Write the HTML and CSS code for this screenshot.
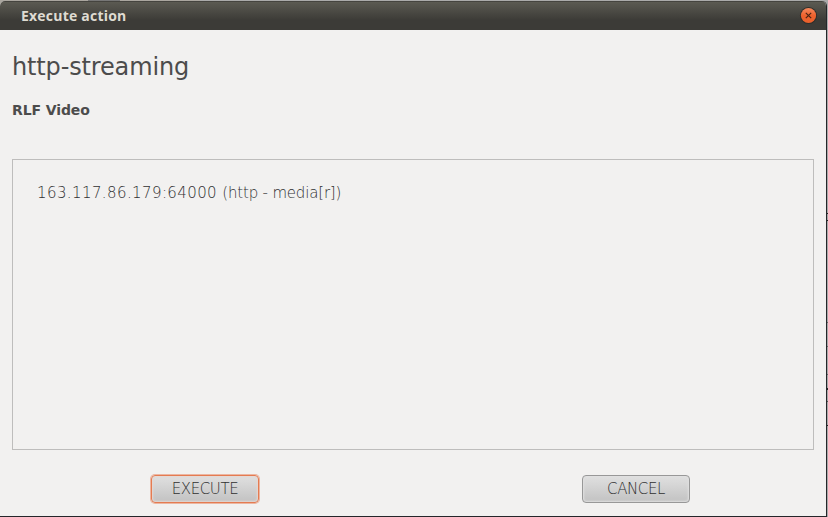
FILE: index.html
```html
<!DOCTYPE html>
<html lang="en">
<head>
<meta charset="utf-8">
<title>Execute action</title>
<link rel="stylesheet" href="styles.css">
</head>
<body>
<div class="window">
  <header class="titlebar">
    <span class="window-title">Execute action</span>
    <button class="close" aria-label="Close">
      <svg width="20" height="20" viewBox="0 0 20 20">
        <defs><linearGradient id="orange" x1="0" y1="0" x2="0" y2="1"><stop offset="0" stop-color="#f58a5f"/><stop offset=".5" stop-color="#ee622e"/><stop offset="1" stop-color="#e9602c"/></linearGradient></defs>
        <circle cx="10.5" cy="9.5" r="8.6" fill="#2f2e2a"/>
        <circle cx="10.5" cy="9.5" r="7.6" fill="url(#orange)"/>
        <path d="M7.8 6.8l5.4 5.4M13.2 6.8l-5.4 5.4" stroke="#4b2414" stroke-width="1.2"/>
      </svg>
    </button>
  </header>
  <main class="content">
    <h1>http-streaming</h1>
    <h2>RLF Video</h2>
    <div class="list"><div class="item"><span class="address">163.117.86.179:64000 </span><span class="service">(http - media[r])</span></div></div>
    <footer class="actions">
      <button class="btn focused">EXECUTE</button>
      <button class="btn">CANCEL</button>
    </footer>
  </main>
</div>
</body>
</html>
```
FILE: styles.css
```css
* { box-sizing: border-box; }
html { background: #989898; }
body {
  margin: 0;
  padding: 1px 1px 0 0;
  height: 517px;
  overflow: hidden;
  background:
    linear-gradient(#222, #222) 827px 213px / 1px 1px no-repeat,
    linear-gradient(#222, #222) 827px 220px / 1px 1px no-repeat,
    linear-gradient(#666, #666) 827px 322px / 1px 1px no-repeat,
    linear-gradient(#666, #666) 827px 346px / 1px 1px no-repeat,
    linear-gradient(#666, #666) 827px 374px / 1px 1px no-repeat,
    linear-gradient(#222, #222) 827px 388px / 1px 2px no-repeat,
    linear-gradient(#555, #555) 827px 401px / 1px 1px no-repeat,
    linear-gradient(#222, #222) 827px 425px / 1px 1px no-repeat,
    linear-gradient(90deg, #aaa69f 0 88px, #777 88px 120px, #aaa69f 120px 200px, #aaa 200px);
  font-family: "DejaVu Sans", sans-serif;
  color: #4c4c4c;
}
.window {
  height: 516px;
  display: flex;
  flex-direction: column;
  background: #f2f1f0;
  border-right: 1px solid #25262a;
  border-bottom: 1px solid #25262a;
  border-radius: 5px 5px 0 0;
  overflow: hidden;
}
.titlebar {
  height: 29px;
  flex: none;
  display: flex;
  align-items: center;
  justify-content: space-between;
  padding: 0 8px 0 21px;
  background: linear-gradient(#5b5a52, #3c3b37 65%);
  border-top: 1px solid #45443f;
}
.window-title {
  font: bold 14px/20px "Open Sans", sans-serif;
  letter-spacing: .22px;
  color: #dfdbd2;
}
.close { display: flex; padding: 0; border: 0; background: none; }
.content { flex: 1; display: flex; flex-direction: column; padding: 19px 12px 0; }
h1 { margin: 0; font-size: 24px; line-height: 36px; font-weight: 400; letter-spacing: -.15px; white-space: nowrap; }
h2 { margin: 14px 0 0; font-size: 14px; line-height: 22px; font-weight: 700; letter-spacing: -.1px; }
.list { margin-top: 38px; height: 291px; border: 1px solid #bebdbc; padding: 23px 24px; }
.item { color: #303030; font-size: 15px; line-height: 20px; font-weight: 200; white-space: nowrap; }
.address { letter-spacing: .4px; }
.service { letter-spacing: -.18px; }
.actions { display: flex; justify-content: space-between; padding: 25px 124px 0 139px; }
.btn {
  width: 108px;
  height: 28px;
  padding: 0;
  border: 1px solid #989898;
  border-radius: 4px;
  background: linear-gradient(#e0e0e0, #c2c2c2);
  box-shadow: inset 0 0 2px 1px #e0e0e0;
  color: #303030;
  font: 200 15px/20px "DejaVu Sans", sans-serif;
  letter-spacing: -.4px;
}
.focused { border-color: #e57b51; box-shadow: 0 0 0 1px rgba(229, 123, 81, .5), inset 0 0 2px 1px #e4d8d3; }
```
